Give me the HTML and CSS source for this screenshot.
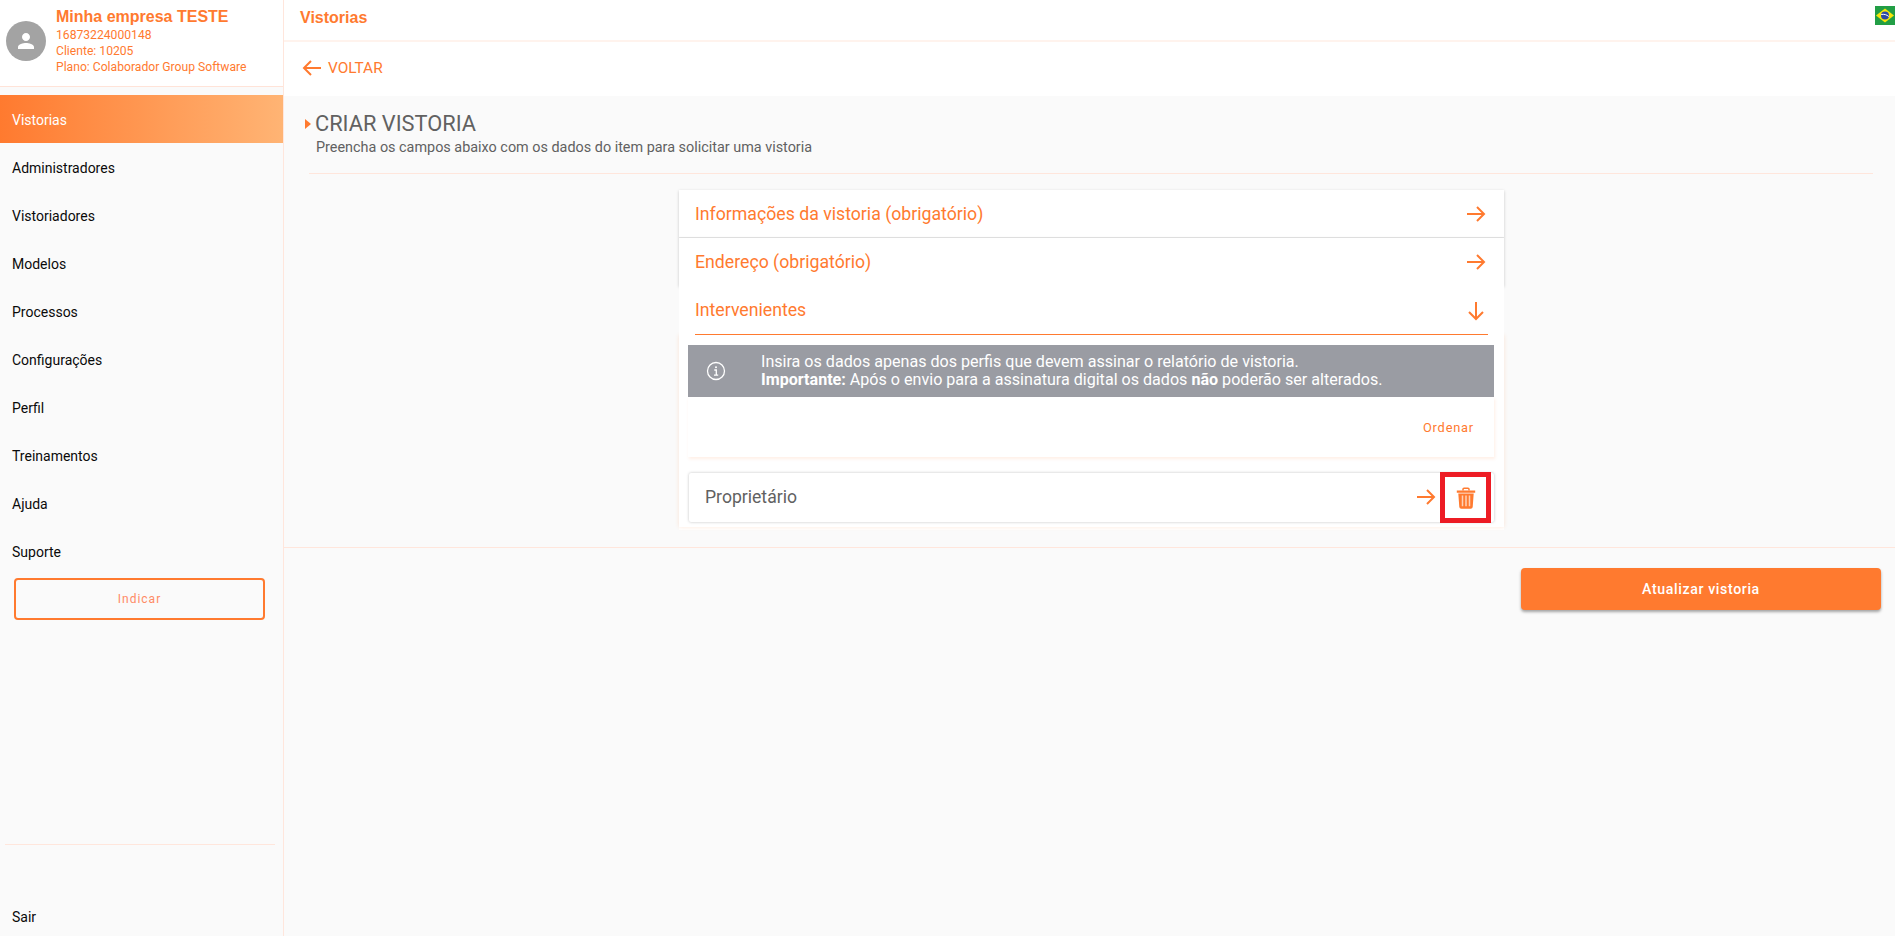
FILE: index.html
```html
<!DOCTYPE html>
<html lang="pt-BR">
<head>
<meta charset="utf-8">
<title>Vistorias</title>
<link rel="stylesheet" href="styles.css">
</head>
<body>
<div class="app">
  <aside class="sidebar">
    <header class="account">
      <div class="avatar">
        <svg viewBox="0 0 24 24" width="24" height="24"><path fill="#fff" d="M12 12c2.210 0 4-1.790 4-4s-1.790-4-4-4-4 1.790-4 4 1.790 4 4 4zm0 2c-2.670 0-8 1.340-8 4v2h16v-2c0-2.660-5.330-4-8-4z"/></svg>
      </div>
      <div class="account-text">
        <div class="company">Minha empresa TESTE</div>
        <div class="meta">16873224000148</div>
        <div class="meta">Cliente: 10205</div>
        <div class="meta">Plano: Colaborador Group Software</div>
      </div>
    </header>
    <nav class="menu">
      <a class="menu-item active">Vistorias</a>
      <a class="menu-item">Administradores</a>
      <a class="menu-item">Vistoriadores</a>
      <a class="menu-item">Modelos</a>
      <a class="menu-item">Processos</a>
      <a class="menu-item">Configurações</a>
      <a class="menu-item">Perfil</a>
      <a class="menu-item">Treinamentos</a>
      <a class="menu-item">Ajuda</a>
      <a class="menu-item">Suporte</a>
    </nav>
    <button class="indicate">Indicar</button>
    <div class="sidebar-foot">
      <a class="menu-item">Sair</a>
    </div>
  </aside>
  <main class="main">
    <div class="topbar">
      <span class="topbar-title">Vistorias</span>
      <svg class="flag" viewBox="0 0 20 19" width="20" height="19"><rect width="20" height="19" fill="#229e45"/><path fill="#f8e509" d="M10 2.500 19 9.500 10 16.500 1 9.500z"/><circle cx="10" cy="9.500" r="4" fill="#2b49a3"/><path d="M6.200 8.500c3-.6 5.500.2 7.600 2" stroke="#fff" stroke-width="1" fill="none"/></svg>
    </div>
    <div class="backbar">
      <svg class="icon" viewBox="0 0 24 24" width="24" height="24"><path class="stroke" d="M21 12H4M11 5l-7 7 7 7"/></svg>
      <span>VOLTAR</span>
    </div>
    <section class="page-head">
      <div class="title-row"><span class="caret"></span><h1>CRIAR VISTORIA</h1></div>
      <p>Preencha os campos abaixo com os dados do item para solicitar uma vistoria</p>
      <hr class="head-rule">
    </section>
    <section class="form-area">
      <div class="panel">
        <div class="acc-row first">
          <span>Informações da vistoria (obrigatório)</span>
          <svg class="icon" viewBox="0 0 24 24" width="24" height="24"><path class="stroke" d="M3 12h17M13 5l7 7-7 7"/></svg>
        </div>
        <div class="acc-row second">
          <span>Endereço (obrigatório)</span>
          <svg class="icon" viewBox="0 0 24 24" width="24" height="24"><path class="stroke" d="M3 12h17M13 5l7 7-7 7"/></svg>
        </div>
        <div class="acc-open-wrap">
          <div class="acc-open">
            <span>Intervenientes</span>
            <svg class="icon" viewBox="0 0 24 24" width="24" height="24"><path class="stroke" d="M12 4v17M5 14l7 7 7-7"/></svg>
          </div>
        </div>
        <div class="acc-body">
          <div class="notice">
            <svg class="notice-icon" viewBox="0 0 20 20" width="20" height="20"><circle cx="10" cy="10" r="8.500" fill="none" stroke="#fff" stroke-width="1.300"/><circle cx="10" cy="6.200" r="1" fill="#fff"/><path d="M8.300 9h2v5M8 14.200h4.200" fill="none" stroke="#fff" stroke-width="1.300"/></svg>
            <div class="notice-text">
              Insira os dados apenas dos perfis que devem assinar o relatório de vistoria.<br>
              <b>Importante:</b> Após o envio para a assinatura digital os dados <b>não</b> poderão ser alterados.
            </div>
          </div>
          <div class="sort-row"><span>Ordenar</span></div>
          <div class="person">
            <span class="person-name">Proprietário</span>
            <svg class="icon" viewBox="0 0 24 24" width="24" height="24"><path class="stroke" d="M3 12h17M13 5l7 7-7 7"/></svg>
            <div class="delete">
              <svg viewBox="0 0 24 24" width="24" height="24"><path fill="none" stroke="#ff7a2f" stroke-width="1.500" d="M9 4.500V3.300c0-.6.400-1 1-1h4c.6 0 1 .4 1 1v1.200"/><path fill="#ff7a2f" d="M2.800 4.500h18.400v2.200H2.800zM4.300 7.500h15.400l-1 13.400a2 2 0 0 1-2 1.800H7.300a2 2 0 0 1-2-1.800z"/><path stroke="#ffd2b8" stroke-width="1.500" d="M8.500 9.500v10.800M12 9.500v10.800M15.500 9.500v10.800"/></svg>
            </div>
          </div>
        </div>
      </div>
    </section>
    <div class="actions">
      <button class="primary">Atualizar vistoria</button>
    </div>
  </main>
</div>
</body>
</html>
```
FILE: styles.css
```css
* { box-sizing: border-box; }
html, body { margin: 0; height: 100%; }
body {
  font-family: Roboto, "Liberation Sans", Arial, sans-serif;
  background: #fafafa;
  overflow: hidden;
}
.app { display: flex; height: 936px; }

/* Sidebar */
.sidebar {
  width: 284px;
  flex: none;
  display: flex;
  flex-direction: column;
  background: #fafafa;
  border-right: 1px solid #ffe6dc;
}
.account {
  height: 87px;
  margin-bottom: 8px;
  padding: 0 5px 0 6px;
  display: flex;
  align-items: flex-start;
  gap: 10px;
  background: #fff;
  border-bottom: 1px solid #ffe3d8;
}
.avatar {
  width: 40px;
  height: 40px;
  margin-top: 21px;
  border-radius: 50%;
  background: #a3a3a3;
  display: flex;
  align-items: center;
  justify-content: center;
  flex: none;
}
.account-text { padding-top: 7px; color: #ff7a2f; }
.company { font-size: 16px; font-weight: 700; line-height: 20px; font-family: "Liberation Sans", Arial, sans-serif; }
.meta { font-size: 12.150px; line-height: 16px; }
.menu { display: flex; flex-direction: column; }
.menu-item {
  height: 48px;
  padding: 2px 0 0 12px;
  display: flex;
  align-items: center;
  font-size: 14px;
  color: #0a0a0a;
}
.menu-item.active {
  color: #fff;
  background: linear-gradient(90deg, #ff7a2f 0%, #ffb474 100%);
}
.indicate {
  width: 251px;
  height: 42px;
  margin: 3px 0 0 14px;
  background: transparent;
  border: 2px solid #ff7a2f;
  border-radius: 4px;
  color: #ff8a65;
  font: 400 12px Roboto, sans-serif;
  letter-spacing: 1px;
}
.sidebar-foot {
  margin: auto 8px 0 5px;
  height: 92px;
  border-top: 1px solid #ffe6dc;
  display: flex;
  align-items: flex-end;
}
.sidebar-foot .menu-item { padding: 0 0 0 7px; height: 38px; }

/* Main */
.main { flex: 1; min-width: 0; display: flex; flex-direction: column; }
.topbar {
  height: 42px;
  background: #fff;
  border-bottom: 2px solid #fff3ed;
  display: flex;
  align-items: flex-start;
  justify-content: space-between;
  padding-left: 16px;
}
.topbar-title { font-size: 16px; font-weight: 700; line-height: 35px; color: #ff7a2f; font-family: "Liberation Sans", Arial, sans-serif; }
.flag { margin-top: 6px; }
.backbar {
  height: 54px;
  padding: 0 0 2px 16px;
  background: #fff;
  display: flex;
  align-items: center;
  gap: 4px;
  font-size: 15.400px;
  color: #ff7a2f;
}
.icon { flex: none; }
.stroke { fill: none; stroke: #ff7a2f; stroke-width: 2; }
.page-head { padding: 16px 22px 0 21px; }
.title-row { display: flex; align-items: center; gap: 4px; }
.caret {
  width: 0;
  height: 0;
  border-left: 6px solid #ff7a2f;
  border-top: 5.500px solid transparent;
  border-bottom: 5.500px solid transparent;
}
h1 { margin: 0; font-size: 21.800px; font-weight: 400; line-height: 24px; color: #616161; }
.page-head p { margin: 3px 0 0 11px; font-size: 14.400px; line-height: 18px; color: #616161; }
.head-rule { margin: 16px 0 0 4px; border: 0; border-top: 1px solid #ffe6dc; }
.form-area { padding: 16px 0 0 4px; display: flex; justify-content: center; }
.panel { width: 825px; height: 340px; background: #fff; }
.acc-row {
  height: 48px;
  padding: 0 16px;
  display: flex;
  align-items: center;
  justify-content: space-between;
  font-size: 17.700px;
  color: #ff7a2f;
  box-shadow: 0 1px 3px rgba(0,0,0,.2);
  position: relative;
  background: #fff;
}
.acc-row.first { border-bottom: 1px solid #e6e6e6; }
.acc-open-wrap { position: relative; padding: 0 16px; background: #fff; }
.acc-open {
  height: 49px;
  display: flex;
  align-items: center;
  justify-content: space-between;
  font-size: 17.700px;
  color: #ff7a2f;
  border-bottom: 1px solid #ff7a2f;
}
.acc-body {
  height: 192px;
  padding: 10px 10px 0 9px;
  box-shadow: 0 0 4px rgba(255,122,47,.18);
}
.notice {
  height: 52px;
  background: #9a9ca3;
  color: #fff;
  display: flex;
  align-items: center;
  font-size: 16.100px;
  line-height: 18px;
}
.notice-icon { margin: 0 0 0 18px; flex: none; }
.notice-text { margin-left: 35px; }
.sort-row {
  height: 60px;
  display: flex;
  align-items: center;
  justify-content: flex-end;
  padding-right: 20px;
  font: 400 12.800px Roboto, sans-serif;
  letter-spacing: .8px;
  color: #ff7a2f;
  box-shadow: 1px 2px 3px rgba(255,122,47,.12);
}
.person {
  height: 49px;
  margin: 16px 0 0 1px;
  padding: 0 0 2px 16px;
  display: flex;
  align-items: center;
  border-radius: 2px;
  box-shadow: 0 0 3px rgba(0,0,0,.25);
  font-size: 17.600px;
  color: #616161;
}
.person-name { flex: 1; }
.delete {
  width: 51px;
  height: 51px;
  margin: 2px 3px 0 2px;
  border: 5px solid #ed1c24;
  display: flex;
  align-items: center;
  justify-content: center;
  background: #fff;
}
.actions {
  margin-top: 17px;
  padding: 20px 14px 0 0;
  border-top: 1px solid #ffe6dc;
  display: flex;
  justify-content: flex-end;
}
.primary {
  width: 360px;
  height: 42px;
  border: 0;
  border-radius: 4px;
  background: #ff7a2f;
  color: #fff;
  font: 500 14.200px Roboto, sans-serif;
  letter-spacing: .6px;
  box-shadow: 0 2px 3px rgba(0,0,0,.35);
}
```
